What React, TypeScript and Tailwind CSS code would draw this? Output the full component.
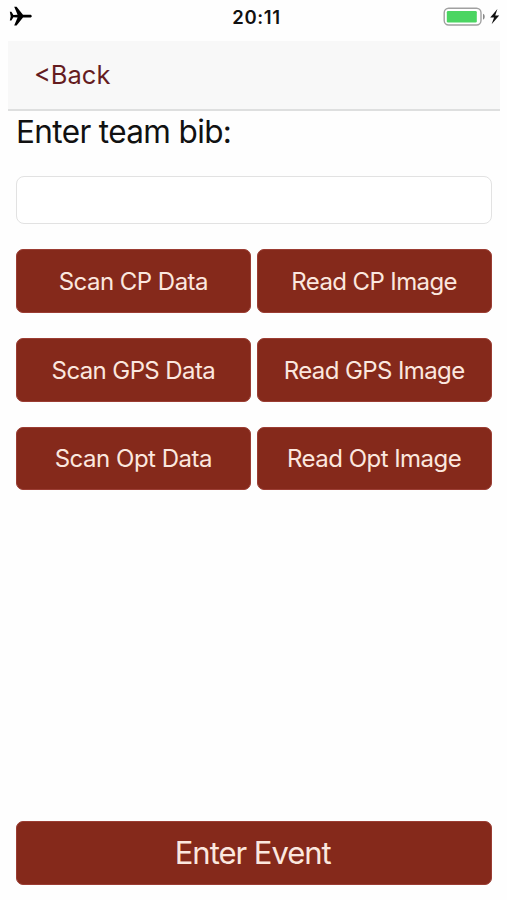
const actions = [
  { label: 'Scan CP Data', spacing: 'tracking-[-0.022em]' },
  { label: 'Read CP Image', spacing: 'tracking-[-0.025em]' },
  { label: 'Scan GPS Data', spacing: 'tracking-[-0.025em]' },
  { label: 'Read GPS Image', spacing: 'tracking-[-0.025em]' },
  { label: 'Scan Opt Data', spacing: 'tracking-[-0.02em]' },
  { label: 'Read Opt Image', spacing: 'tracking-[-0.022em]' },
];

function StatusBar() {
  return (
    <div className="grid h-[41px] grid-cols-3 pt-[5px]">
      <svg className="mt-px ml-[9px] h-[21px] w-[24px]" viewBox="0 0 24 21" fill="#000">
        <path d="M21 8.8H14L7.6 .8H5.2L8.6 8.8L4.4 9.1L2.4 5.8H.8L1.7 10.2.8 14.6H2.4L4.4 11.3L8.6 11.6L5.2 19.6H7.6L14 11.6H21C23.4 11.6 23.4 8.8 21 8.8Z" />
      </svg>
      <span className="pl-[6px] text-center text-[18.5px] leading-[24px] font-semibold tracking-[0.035em] text-[#111]">20:11</span>
      <svg className="mt-[2px] ml-auto mr-[7px] h-[20px] w-[57px]" viewBox="0 0 57 20">
        <rect x="1.2" y="1.2" width="36.8" height="16.8" rx="4.5" fill="#fff" stroke="#a0a0a0" strokeWidth="1.4" />
        <rect x="3.8" y="4" width="30" height="11.4" rx="1.2" fill="#4bd562" />
        <path d="M40 6.8C42.3 7.5 42.3 11.9 40 12.6Z" fill="#888" />
        <path d="M54.4 2L47.2 10.6H51.1L48.6 17.2L56.2 8.4H52.2Z" fill="#111" />
      </svg>
    </div>
  );
}

export default function App() {
  return (
    <main className="flex h-[900px] w-[507px] flex-col bg-[#fefefe] font-['Inter','Liberation_Sans',sans-serif] text-[#111]">
      <StatusBar />
      <header className="mr-[7px] ml-2 flex h-[70px] items-center border-b-2 border-[#dedfdf] bg-[#f8f8f8] pl-[26px]">
        <button className="text-[25.5px] leading-[30px] text-[#651c1f]">&lt;Back</button>
      </header>
      <div className="flex flex-1 flex-col pr-[15.5px] pb-[15.5px] pl-4">
        <label htmlFor="bib" className="mt-px h-[64px] text-[31.5px] leading-[40px] tracking-[-0.02em] whitespace-nowrap">
          Enter team bib:
        </label>
        <input id="bib" className="h-12 w-full rounded-[8px] border-[1.5px] border-[#e2e2e2] bg-white px-3 text-2xl outline-none" />
        <div className="mt-[25px] grid grid-cols-2 gap-x-[6px] gap-y-[25px]">
          {actions.map(({ label, spacing }) => (
            <button key={label} className={`h-[63.8px] rounded-[7px] border border-[#9b3d33] bg-[#85291b] pt-[2px] text-[24px] text-[#fbe7df] ${spacing}`}>
              {label}
            </button>
          ))}
        </div>
        <button className="mt-auto h-[63.5px] shrink-0 rounded-[7px] border border-[#9b3d33] bg-[#85291b] pr-[2px] text-[31px] tracking-[-0.033em] text-[#fbe7df]">
          Enter Event
        </button>
      </div>
    </main>
  );
}
